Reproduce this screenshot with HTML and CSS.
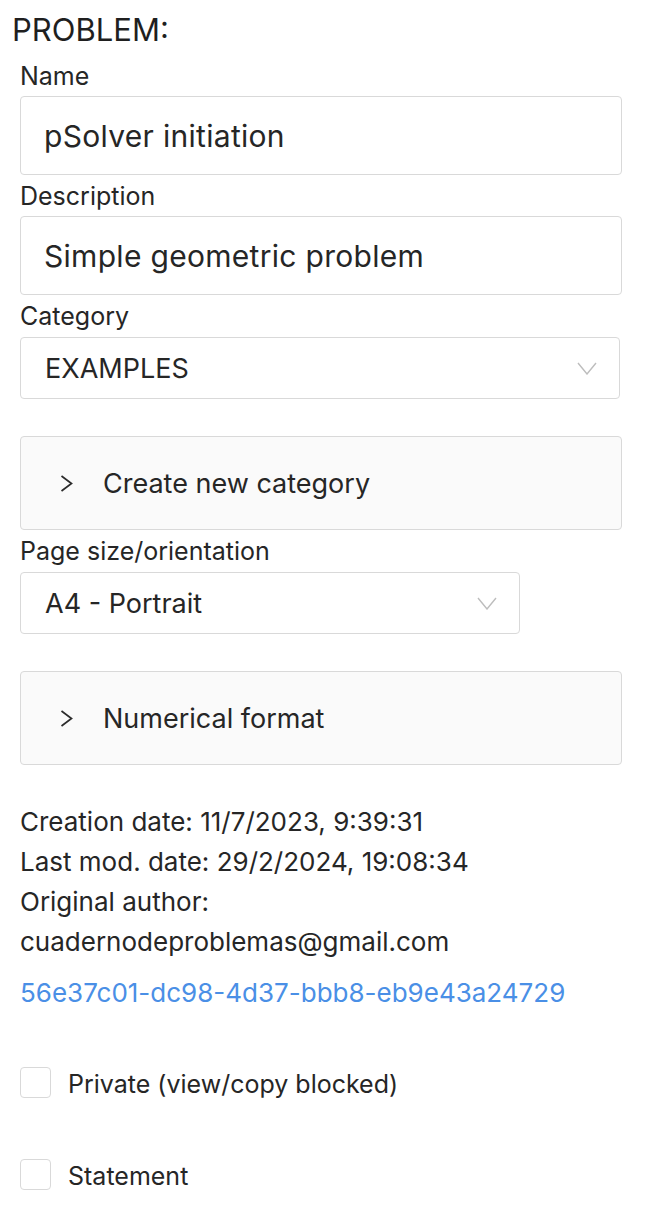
FILE: index.html
```html
<!DOCTYPE html>
<html lang="en">
<head>
<meta charset="utf-8">
<title>Problem</title>
<link rel="stylesheet" href="styles.css">
</head>
<body>
<div class="page">
  <h1 class="title">PROBLEM:</h1>
  <div class="form">
    <div class="field">
      <label class="label">Name</label>
      <div class="input">pSolver initiation</div>
    </div>
    <div class="field">
      <label class="label">Description</label>
      <div class="input">Simple geometric problem</div>
    </div>
    <div class="field">
      <label class="label">Category</label>
      <div class="select">
        <span class="select-value">EXAMPLES</span>
        <svg class="select-arrow" width="20" height="13" viewBox="0 0 20 13"><polyline points="1,1 10,12 19,1" fill="none" stroke="#bdbdbd" stroke-width="1.4"/></svg>
      </div>
    </div>
    <div class="collapse">
      <svg class="collapse-arrow" width="13" height="17" viewBox="0 0 13 17"><polyline points="1.5,1 11.5,8.5 1.5,16" fill="none" stroke="#2b2b2b" stroke-width="1.7"/></svg>
      <span class="collapse-title">Create new category</span>
    </div>
    <div class="field field-after-collapse">
      <label class="label">Page size/orientation</label>
      <div class="select select-narrow">
        <span class="select-value">A4 - Portrait</span>
        <svg class="select-arrow" width="20" height="13" viewBox="0 0 20 13"><polyline points="1,1 10,12 19,1" fill="none" stroke="#bdbdbd" stroke-width="1.4"/></svg>
      </div>
    </div>
    <div class="collapse">
      <svg class="collapse-arrow" width="13" height="17" viewBox="0 0 13 17"><polyline points="1.5,1 11.5,8.5 1.5,16" fill="none" stroke="#2b2b2b" stroke-width="1.7"/></svg>
      <span class="collapse-title">Numerical format</span>
    </div>
    <div class="info">
      <div class="info-line">Creation date: 11/7/2023, 9:39:31</div>
      <div class="info-line">Last mod. date: 29/2/2024, 19:08:34</div>
      <div class="info-line">Original author:</div>
      <div class="info-line">cuadernodeproblemas@gmail.com</div>
    </div>
    <a class="link" href="#">56e37c01-dc98-4d37-bbb8-eb9e43a24729</a>
    <label class="check first">
      <span class="box"></span>
      <span class="check-label">Private (view/copy blocked)</span>
    </label>
    <label class="check">
      <span class="box"></span>
      <span class="check-label">Statement</span>
    </label>
  </div>
</div>
</body>
</html>
```

FILE: styles.css
```css
* { box-sizing: border-box; }
html, body { margin: 0; padding: 0; background: #ffffff; }
body {
  font-family: Inter, "Noto Sans", "DejaVu Sans", sans-serif;
  color: #262626;
}
.page {
  padding: 12px 24px 0 12px;
}
.title {
  margin: 0;
  font-size: 31px;
  line-height: 36px;
  font-weight: 400;
  color: #1f1f1f;
}
.form {
  padding-left: 8px;
  padding-top: 13px;
  display: flex;
  flex-direction: column;
}
.field {
  display: flex;
  flex-direction: column;
  margin-bottom: 6px;
}
.label {
  font-size: 25px;
  line-height: 30px;
  margin-bottom: 5px;
}
.input {
  height: 79px;
  border: 1px solid #d9d9d9;
  border-radius: 4px;
  font-size: 30px;
  letter-spacing: 0.3px;
  display: flex;
  align-items: center;
  padding-left: 23px;
}
.select {
  height: 62px;
  margin-top: 1px;
  width: calc(100% - 2px);
  border: 1px solid #d9d9d9;
  border-radius: 4px;
  font-size: 27px;
  display: flex;
  align-items: center;
  justify-content: space-between;
  padding: 0 22px 0 24px;
}
.select-narrow { width: 500px; }
.select-arrow { display: block; }
.collapse {
  margin-top: 31px;
  height: 94px;
  border: 1px solid #d9d9d9;
  border-radius: 4px;
  background: #fafafa;
  display: flex;
  align-items: center;
  padding-left: 39px;
  font-size: 27px;
}
.collapse-arrow { display: block; margin-right: 30px; margin-top: 1px; }
.field-after-collapse { margin-top: 6px; }
.info {
  margin-top: 37px;
  font-size: 26px;
  line-height: 40px;
}
.link {
  margin-top: 11px;
  font-size: 26px;
  line-height: 40px;
  color: #4a8fe6;
  text-decoration: none;
}
.check {
  display: flex;
  align-items: center;
  gap: 17px;
  margin-top: 57px;
}
.check.first { margin-top: 52px; }
.box {
  width: 31px;
  height: 31px;
  border: 1px solid #d9d9d9;
  border-radius: 4px;
  background: #fff;
  flex: none;
}
.check-label {
  font-size: 25px;
  line-height: 31px;
  padding-top: 4px;
}
```
